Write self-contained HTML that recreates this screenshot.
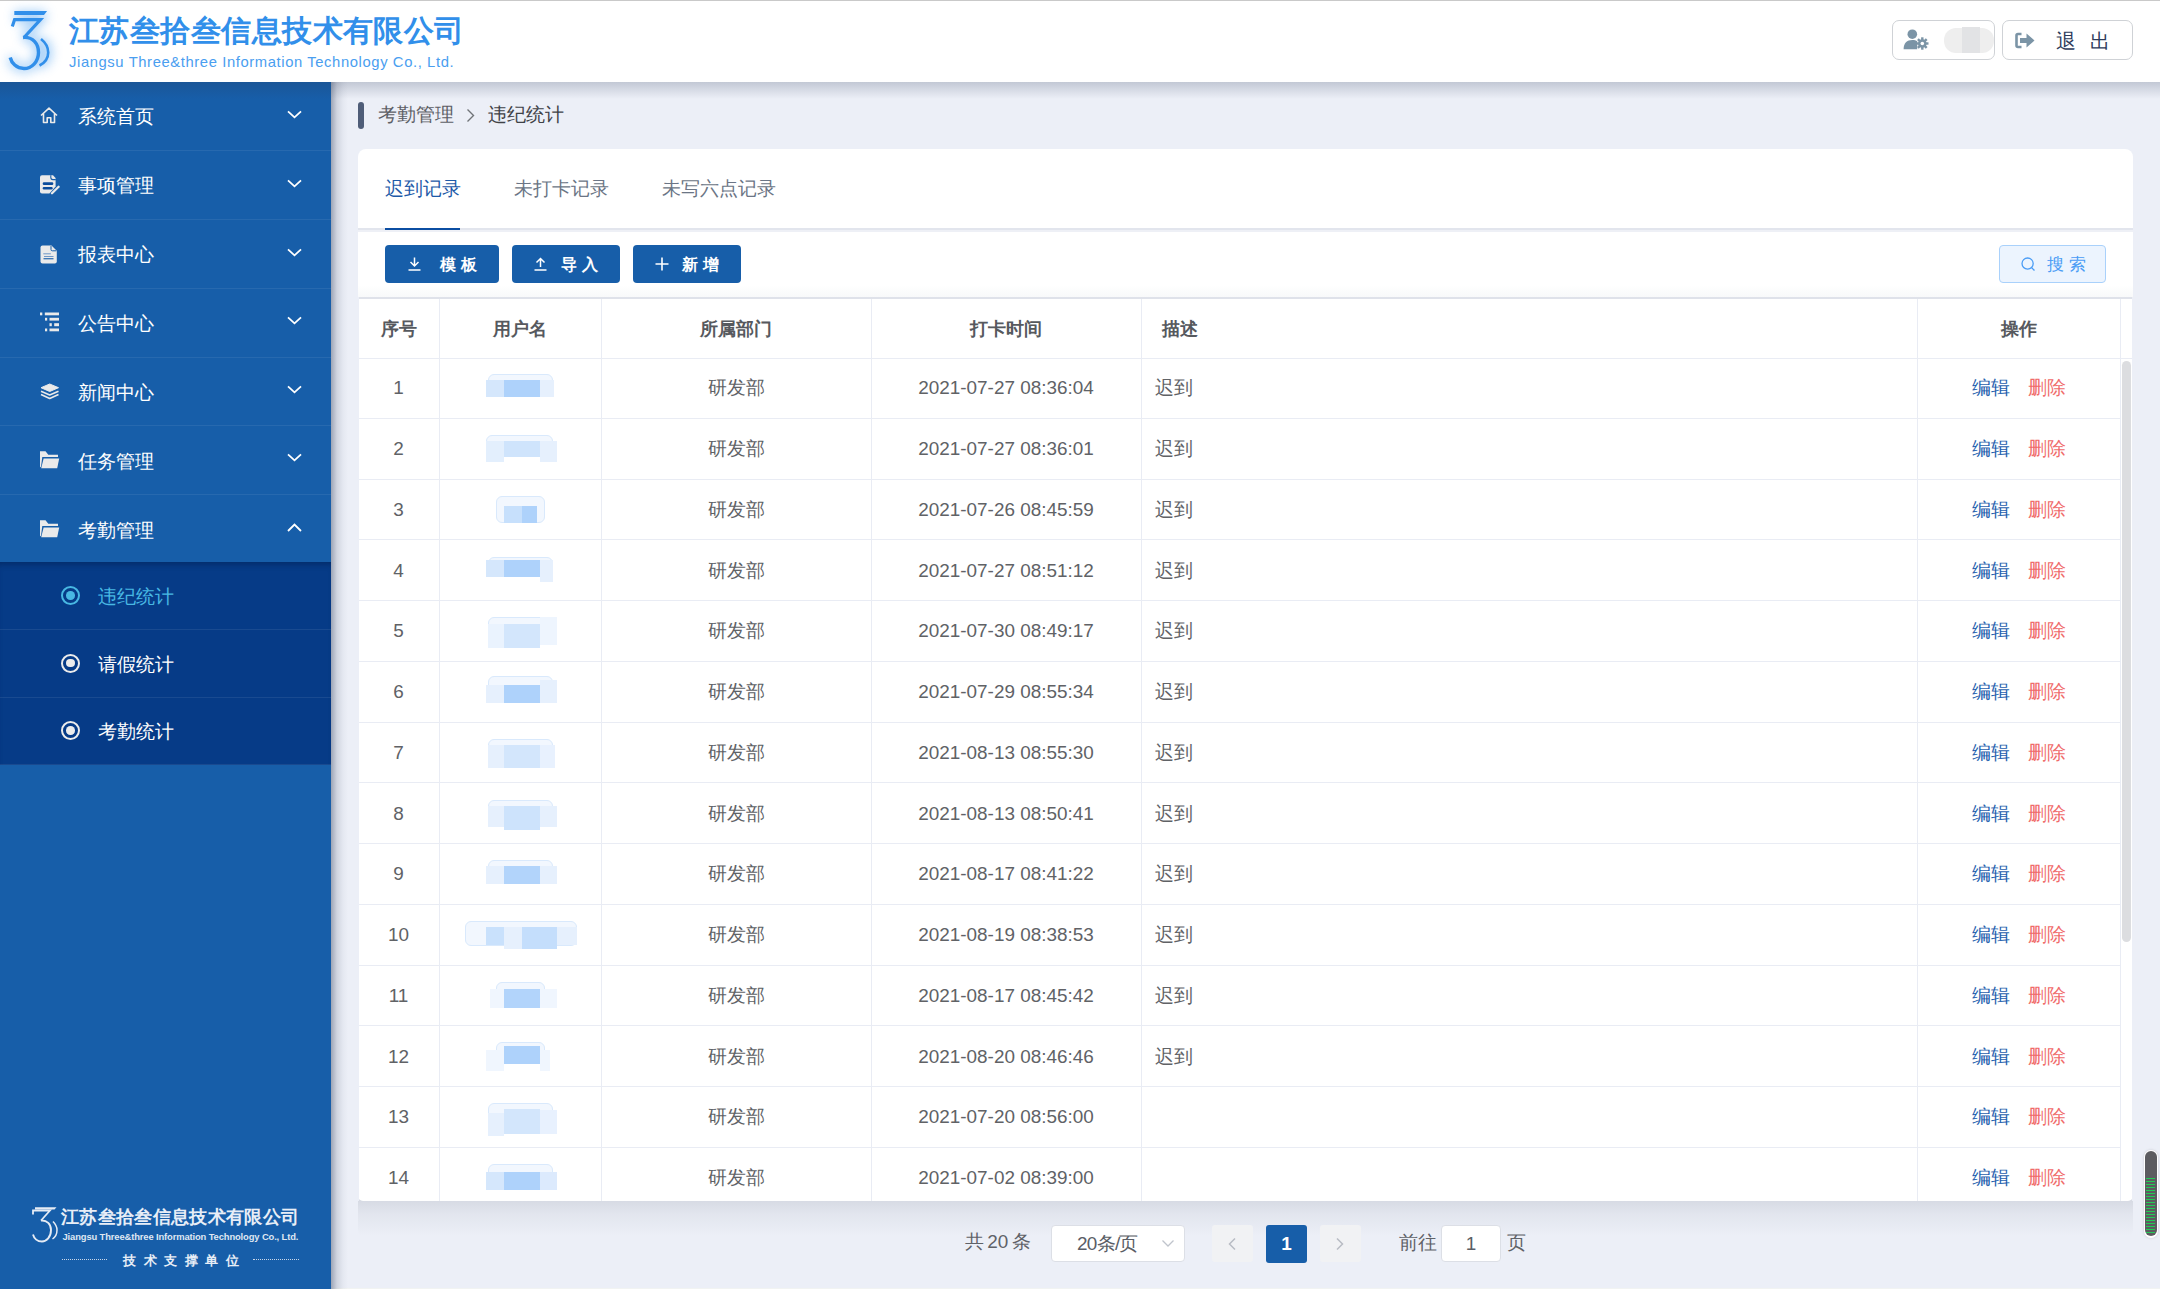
<!DOCTYPE html>
<html><head><meta charset="utf-8">
<style>
*{box-sizing:border-box;margin:0;padding:0}
html,body{width:2160px;height:1289px;overflow:hidden;background:#eceff7;font-family:"Liberation Sans",sans-serif;color:#606266}
.abs{position:absolute}
#hdr{position:absolute;left:0;top:0;width:2160px;height:82px;background:#fff;z-index:5}
#side{position:absolute;left:0;top:82px;width:331px;height:1207px;background:#175ea9;z-index:4}
.mi{position:absolute;left:0;width:331px;height:69px;border-bottom:1px solid rgba(255,255,255,.07)}
.mi .t{position:absolute;left:78px;top:0;line-height:69px;font-size:18.9px;color:#fff;white-space:nowrap}
.mi svg.ic{position:absolute;left:40px}
.mi svg.ch{position:absolute;left:287px;top:30px}
#sub{position:absolute;left:0;top:480px;width:331px;height:203px;background:#063b87;box-shadow:inset 0 6px 6px -4px rgba(0,20,60,.45)}
.si{position:absolute;left:0;width:331px;height:68px;border-bottom:1px solid rgba(255,255,255,.08)}
.si .t{position:absolute;left:98px;top:1px;line-height:68px;font-size:18.9px;color:#fff;white-space:nowrap}
.si .r{position:absolute;left:61px;top:24px;width:19px;height:19px;border:2.2px solid #ececec;border-radius:50%}
.si .r:after{content:"";position:absolute;left:3px;top:3px;width:8.6px;height:8.6px;border-radius:50%;background:#ececec}
#card{position:absolute;left:358px;top:149px;width:1775px;height:1052px;background:#fff;border-radius:8px 8px 5px 5px;overflow:hidden}
.si.act .t{color:#48b8e3}
.si.act .r{border-color:#48b8e3}
.si.act .r:after{background:#48b8e3}
.tab{font-size:18.9px;line-height:32px;white-space:nowrap}
.btn{top:96px;height:38px;background:#175ea9;border-radius:4px}
.btn span{position:absolute;top:6px;font-size:15.8px;line-height:27px;color:#fff;font-weight:bold;letter-spacing:4.8px;white-space:nowrap}
.th{font-size:18.4px;font-weight:bold;color:#56595e;white-space:nowrap}
.c{text-align:center}
.td{font-size:18.9px;color:#606266;white-space:nowrap}
.hl{left:0;width:1775px;height:1px;background:#e9ecf4}
.vl{top:150px;width:1px;height:902px;background:#e9ecf4}
.ops{width:203px;height:60px;line-height:60px;text-align:center;font-size:18.9px;white-space:nowrap}
.pg{font-size:18.9px;color:#5f6268;white-space:nowrap}
</style></head><body>
<div id="hdr"><div class="abs" style="left:0;top:0;width:2160px;height:1px;background:#c9c9c9"></div>
<svg class="abs" style="left:0;top:0" width="68" height="82" viewBox="0 0 68 82">
<defs><filter id="blr" x="-50%" y="-50%" width="200%" height="200%"><feGaussianBlur stdDeviation="5.5"/></filter></defs>
<g filter="url(#blr)" opacity=".55">
<path d="M14.3 11 L47.1 11 L44 15 L14.3 15 Z" fill="#4a9ef0"/>
<path d="M15 19.6 L40.5 19.6 L24 37.5 M23 37.5 C33 36.5 38.5 44 38.5 52.5 C38.5 62 31.5 68.5 24 68.5 C16.5 68.5 11.5 63 10.2 57.5 M41 39 C46 43 48.2 48 48.2 52.5 C48.2 57.5 45.5 62.5 39.5 65.5" fill="none" stroke="#4a9ef0" stroke-width="7"/>
</g>
<path d="M14.3 11 L47.1 11 L44 15 L14.3 15 Z" fill="#318fea"/>
<path d="M12.3 26.5 L14.6 19.6 L40.5 19.6 L24 37.5" fill="none" stroke="#318fea" stroke-width="3.2" stroke-linejoin="miter"/>
<path d="M23 37.5 C33 36.5 38.5 44 38.5 52.5 C38.5 62 31.5 68.5 24 68.5 C16.5 68.5 11.5 63 10.2 57.5" fill="none" stroke="#318fea" stroke-width="3.4"/>
<path d="M41 39 C46 43 48.2 48 48.2 52.5 C48.2 57.5 45.5 62.5 39.5 65.5" fill="none" stroke="#318fea" stroke-width="2.6"/>
</svg>
<div class="abs" id="logot" style="left:69px;top:11px;font-size:30px;letter-spacing:0.45px;font-weight:bold;color:#318fea;white-space:nowrap;line-height:40px">江苏叁拾叁信息技术有限公司</div>
<div class="abs" id="logoe" style="left:69px;top:52.5px;font-size:14.8px;color:#4a9ef0;white-space:nowrap;line-height:18px;letter-spacing:0.6px">Jiangsu Three&amp;three Information Technology Co., Ltd.</div>
<div class="abs" style="left:1892px;top:20px;width:103px;height:40px;border:1px solid #cfd2d6;border-radius:7px"></div>
<svg class="abs" style="left:1903px;top:29px" width="26" height="22" viewBox="0 0 26 22">
<circle cx="9.3" cy="5.2" r="4.8" fill="#7b94a6"/>
<path d="M0.6 20.3 C0.6 14 4 11 9.3 11 C11.5 11 13 11.5 14.2 12.3 L14.2 20.3 Z" fill="#7b94a6"/>
<g transform="translate(19.3 14.5)" fill="#7b94a6"><circle r="4.3"/><rect x="-1.2" y="-6.2" width="2.4" height="12.4"/><rect x="-6.2" y="-1.2" width="12.4" height="2.4"/><rect x="-1.2" y="-6.2" width="2.4" height="12.4" transform="rotate(45)"/><rect x="-1.2" y="-6.2" width="2.4" height="12.4" transform="rotate(-45)"/></g>
<circle cx="19.3" cy="14.5" r="1.8" fill="#fff"/>
</svg>
<div class="abs" style="left:1944px;top:28px;width:50px;height:25px;border-radius:12px;background:#eeeeee"></div>
<div class="abs" style="left:1962px;top:27px;width:18px;height:26px;background:#e2e3e5"></div>
<div class="abs" style="left:2002px;top:20px;width:131px;height:40px;border:1px solid #cfd2d6;border-radius:7px"></div>
<svg class="abs" style="left:2015px;top:32px" width="22" height="17" viewBox="0 0 22 17">
<path d="M6.5 2 L3 2 Q1.5 2 1.5 3.5 L1.5 13.5 Q1.5 15 3 15 L6.5 15" fill="none" stroke="#7b94a6" stroke-width="2.6"/>
<path d="M5 6 L11.5 6 L11.5 1.5 L19.5 8.5 L11.5 15.5 L11.5 11 L5 11 Z" fill="#7b94a6"/>
</svg>
<div class="abs" style="left:2055.5px;top:28px;font-size:20px;color:#2d3b5a;white-space:nowrap;line-height:26px;letter-spacing:14px">退出</div>
</div>
<div id="side">
<div class="mi" style="top:0.40px;height:68.8px"><svg class="ic" style="top:25.00px" width="18" height="17" viewBox="0 0 18 17"><path d="M1 8.5 L9 1.2 L17 8.5 M3.5 6.5 L3.5 15.5 L7.2 15.5 L7.2 10.8 L10.8 10.8 L10.8 15.5 L14.5 15.5 L14.5 6.5" fill="none" stroke="#eaeaea" stroke-width="1.6" stroke-linejoin="round"/></svg><div class="t" style="top:0.60px;line-height:68.8px">系统首页</div><svg class="ch" style="top:28.00px" width="15" height="9" viewBox="0 0 15 9"><path d="M1 1.3 L7.5 7.3 L14 1.3" fill="none" stroke="#fff" stroke-width="1.8"/></svg></div>
<div class="mi" style="top:69.20px;height:68.8px"><svg class="ic" style="top:23.80px" width="20" height="20" viewBox="0 0 20 20"><path d="M2 0.3 H13 L15.6 3 V11.6 L9.4 18.4 H2 Q0 18.4 0 16.4 V2.3 Q0 0.3 2 0.3 Z" fill="#eaeaea"/><path d="M10.8 0.3 V2.6 Q10.8 4.6 12.8 4.6 H15.8" fill="none" stroke="#175ea9" stroke-width="1.1"/><rect x="2.7" y="7.3" width="10.6" height="2.7" rx="1.3" fill="#0b4c9c"/><rect x="2.7" y="11.9" width="10" height="2.5" rx="1.2" fill="#0b4c9c"/><path d="M12 18.3 L18.6 11.8" stroke="#eaeaea" stroke-width="2.3" stroke-linecap="round"/></svg><div class="t" style="top:0.76px;line-height:68.8px">事项管理</div><svg class="ch" style="top:27.80px" width="15" height="9" viewBox="0 0 15 9"><path d="M1 1.3 L7.5 7.3 L14 1.3" fill="none" stroke="#fff" stroke-width="1.8"/></svg></div>
<div class="mi" style="top:138.00px;height:68.8px"><svg class="ic" style="top:24.60px" width="18" height="19" viewBox="0 0 18 19"><path d="M2.5 0.5 L11.5 0.5 L16.8 5.8 L16.8 16.5 Q16.8 18.5 14.8 18.5 L2.5 18.5 Q0.5 18.5 0.5 16.5 L0.5 2.5 Q0.5 0.5 2.5 0.5 Z" fill="#eaeaea"/><path d="M11 1 L11 4.5 Q11 5.8 12.3 5.8 L16.3 5.8" fill="none" stroke="#175ea9" stroke-width="1"/><rect x="3.3" y="8.3" width="7.5" height="1" fill="#6f97c6"/><rect x="4" y="11" width="9.5" height="1" fill="#6f97c6"/><rect x="3.5" y="13.2" width="10" height="1.1" fill="#175ea9"/></svg><div class="t" style="top:0.92px;line-height:68.8px">报表中心</div><svg class="ch" style="top:27.60px" width="15" height="9" viewBox="0 0 15 9"><path d="M1 1.3 L7.5 7.3 L14 1.3" fill="none" stroke="#fff" stroke-width="1.8"/></svg></div>
<div class="mi" style="top:206.80px;height:68.8px"><svg class="ic" style="top:23.40px" width="20" height="20" viewBox="0 0 20 20" fill="#eaeaea"><rect x="0" y="0.5" width="2.3" height="2.8"/><rect x="4.8" y="0.5" width="14.2" height="2.8"/><rect x="5" y="5.8" width="2.2" height="2.8"/><rect x="9.5" y="5.8" width="9.5" height="2.8"/><rect x="9.5" y="11.2" width="2.3" height="3"/><rect x="14.2" y="11.2" width="4.8" height="3"/><rect x="5" y="16.5" width="2.2" height="2.8"/><rect x="9.5" y="16.5" width="9.5" height="2.8"/></svg><div class="t" style="top:1.08px;line-height:68.8px">公告中心</div><svg class="ch" style="top:27.40px" width="15" height="9" viewBox="0 0 15 9"><path d="M1 1.3 L7.5 7.3 L14 1.3" fill="none" stroke="#fff" stroke-width="1.8"/></svg></div>
<div class="mi" style="top:275.60px;height:68.8px"><svg class="ic" style="top:25.20px" width="20" height="17" viewBox="0 0 20 17"><path d="M1 4.7 L9.7 1 L18.5 4.7 L9.7 8.5 Z" fill="#eaeaea" stroke="#eaeaea" stroke-width="1" stroke-linejoin="round"/><path d="M1 8.3 L9.7 12 L18.5 8.3" fill="none" stroke="#eaeaea" stroke-width="1.6" stroke-linejoin="round"/><path d="M1 11.5 L9.7 15.5 L18.5 11.5" fill="none" stroke="#eaeaea" stroke-width="1.6" stroke-linejoin="round"/></svg><div class="t" style="top:1.24px;line-height:68.8px">新闻中心</div><svg class="ch" style="top:27.20px" width="15" height="9" viewBox="0 0 15 9"><path d="M1 1.3 L7.5 7.3 L14 1.3" fill="none" stroke="#fff" stroke-width="1.8"/></svg></div>
<div class="mi" style="top:344.40px;height:68.8px"><svg class="ic" style="top:25.00px" width="20" height="18" viewBox="0 0 20 18"><path d="M0 0.2 H5.5 L8.3 3.8 H18 V5.9 H2.3 L0.9 16.6 L0 15.5 Z" fill="#eaeaea"/><path d="M3.6 7.4 H19.2 L17.2 17.2 H1.2 Z" fill="#eaeaea"/></svg><div class="t" style="top:1.40px;line-height:68.8px">任务管理</div><svg class="ch" style="top:27.00px" width="15" height="9" viewBox="0 0 15 9"><path d="M1 1.3 L7.5 7.3 L14 1.3" fill="none" stroke="#fff" stroke-width="1.8"/></svg></div>
<div class="mi" style="top:413.20px;height:68.8px;border-bottom:none"><svg class="ic" style="top:24.80px" width="20" height="18" viewBox="0 0 20 18"><path d="M0 0.2 H5.5 L8.3 3.8 H18 V5.9 H2.3 L0.9 16.6 L0 15.5 Z" fill="#eaeaea"/><path d="M3.6 7.4 H19.2 L17.2 17.2 H1.2 Z" fill="#eaeaea"/></svg><div class="t" style="top:1.56px;line-height:68.8px">考勤管理</div><svg class="ch" style="top:27.80px" width="15" height="9" viewBox="0 0 15 9"><path d="M1 8 L7.5 1.5 L14 8" fill="none" stroke="#fff" stroke-width="1.8"/></svg></div>
<div id="sub">
<div class="si act" style="top:0.00px"><div class="r"></div><div class="t">违纪统计</div></div>
<div class="si" style="top:67.67px"><div class="r"></div><div class="t">请假统计</div></div>
<div class="si" style="top:135.34px"><div class="r"></div><div class="t">考勤统计</div></div>
</div>
<div id="blogo">
<svg class="abs" style="left:31px;top:1124px" width="28" height="40" viewBox="0 0 28 40">
<path d="M4 1.3 L25.5 1.3 L23.5 3.6 L4 3.6 Z" fill="#e6ecf5"/>
<path d="M2 8.5 L2 4.5 L19 4.5 L10 14.5" fill="none" stroke="#e6ecf5" stroke-width="1.8"/>
<path d="M10 14.5 C16 14 20 18 20 24 C20 31 15.5 35.5 11 35.5 C6.5 35.5 3 32.5 2 28.5" fill="none" stroke="#e6ecf5" stroke-width="1.9"/>
<path d="M22 15.5 C25 18.5 26 21.5 26 24 C26 27.5 24.5 31 21.5 33" fill="none" stroke="#e6ecf5" stroke-width="1.5"/>
</svg>
<div class="abs" style="left:61px;top:1122.5px;font-size:18px;font-weight:bold;color:#e8eef7;white-space:nowrap;line-height:24px;letter-spacing:0.35px">江苏叁拾叁信息技术有限公司</div>
<div class="abs" style="left:62.5px;top:1148.5px;font-size:9.4px;font-weight:bold;color:#dfe7f2;white-space:nowrap;line-height:12px;letter-spacing:-0.12px">Jiangsu Three&amp;three Information Technology Co., Ltd.</div>
<div class="abs" style="left:62px;top:1177px;width:45px;border-top:1px dotted #c9d6e8"></div>
<div class="abs" style="left:253px;top:1177px;width:46px;border-top:1px dotted #c9d6e8"></div>
<div class="abs" style="left:123px;top:1170.5px;font-size:12.5px;font-weight:bold;color:#e8eef7;white-space:nowrap;line-height:16px;letter-spacing:7.6px">技术支撑单位</div>
</div>
</div>
<div class="abs" style="left:358px;top:102px;width:6px;height:27px;border-radius:3px;background:#4f5d78"></div>
<div class="abs" id="bc" style="left:378px;top:99px;font-size:18.9px;line-height:32px;color:#5d6066;white-space:nowrap">考勤管理</div>
<svg class="abs" style="left:466px;top:108px" width="9" height="15" viewBox="0 0 9 15"><path d="M1.5 1.5 L7.5 7.5 L1.5 13.5" fill="none" stroke="#707478" stroke-width="1.4"/></svg>
<div class="abs" style="left:488px;top:99px;font-size:18.9px;line-height:32px;color:#3f4247;white-space:nowrap">违纪统计</div>
<div class="abs" style="left:358px;top:1196px;width:1775px;height:40px;background:linear-gradient(rgba(40,50,70,.13),rgba(40,50,70,.05) 45%,rgba(40,50,70,0));border-radius:0 0 6px 6px"></div>
<div id="card">
<div class="abs tab" style="left:27px;top:24px;color:#1d5aa8">迟到记录</div>
<div class="abs tab" style="left:156px;top:24px;color:#6b7585">未打卡记录</div>
<div class="abs tab" style="left:304px;top:24px;color:#6b7585">未写六点记录</div>
<div class="abs" style="left:0;top:79px;width:1775px;height:2px;background:#e2e5ed"></div>
<div class="abs" style="left:0;top:81px;width:1775px;height:2px;background:#eef0f6"></div>
<div class="abs" style="left:27px;top:79px;width:75px;height:2px;background:#0b4ea2"></div>
<div class="abs" style="left:0;top:136px;width:1775px;height:12px;background:linear-gradient(#fff,#f8f9fa)"></div>
<div class="abs btn" style="left:27px;width:114px"><svg width="13" height="14" viewBox="0 0 13 14" style="position:absolute;left:23px;top:12px"><path d="M6.5 0.5 L6.5 9 M2.5 5 L6.5 9 L10.5 5 M0.5 13 L12.5 13" fill="none" stroke="#fff" stroke-width="1.5"/></svg><span style="left:55px">模板</span></div>
<div class="abs btn" style="left:154px;width:108px"><svg width="13" height="14" viewBox="0 0 13 14" style="position:absolute;left:22px;top:12px"><path d="M6.5 10 L6.5 1.5 M2.5 5.5 L6.5 1.5 L10.5 5.5 M0.5 13 L12.5 13" fill="none" stroke="#fff" stroke-width="1.5"/></svg><span style="left:49px">导入</span></div>
<div class="abs btn" style="left:275px;width:108px"><svg width="14" height="14" viewBox="0 0 14 14" style="position:absolute;left:22px;top:12px"><path d="M7 0.5 L7 13.5 M0.5 7 L13.5 7" fill="none" stroke="#fff" stroke-width="1.6"/></svg><span style="left:49px">新增</span></div>
<div class="abs" style="left:1641px;top:96px;width:107px;height:38px;border:1px solid #a9d1fb;border-radius:4px;background:#ecf4fe"><svg width="15" height="15" viewBox="0 0 15 15" style="position:absolute;left:21px;top:11px"><circle cx="6.6" cy="6.6" r="5.6" fill="none" stroke="#4a9cf5" stroke-width="1.3"/><path d="M10.6 10.6 L13.5 13.5" stroke="#4a9cf5" stroke-width="1.3"/></svg><span class="abs" style="left:47px;top:6px;font-size:17px;line-height:26px;color:#4a9cf5;letter-spacing:4.5px;white-space:nowrap">搜索</span></div>
<div class="abs" style="left:0;top:148px;width:1775px;height:2px;background:#dfe2ea"></div>
<div class="abs th c" style="left:0px;top:150.00px;width:81px;height:59px;line-height:59px">序号</div>
<div class="abs th c" style="left:81px;top:150.00px;width:162px;height:59px;line-height:59px">用户名</div>
<div class="abs th c" style="left:243px;top:150.00px;width:270px;height:59px;line-height:59px">所属部门</div>
<div class="abs th c" style="left:513px;top:150.00px;width:270px;height:59px;line-height:59px">打卡时间</div>
<div class="abs th" style="left:804px;top:150.00px;width:238px;height:59px;line-height:59px">描述</div>
<div class="abs th c" style="left:1559px;top:150.00px;width:203px;height:59px;line-height:59px">操作</div>
<div class="abs hl" style="top:209px"></div>
<div class="abs hl" style="top:269px;width:1762px"></div>
<div class="abs hl" style="top:330px;width:1762px"></div>
<div class="abs hl" style="top:390px;width:1762px"></div>
<div class="abs hl" style="top:451px;width:1762px"></div>
<div class="abs hl" style="top:512px;width:1762px"></div>
<div class="abs hl" style="top:573px;width:1762px"></div>
<div class="abs hl" style="top:633px;width:1762px"></div>
<div class="abs hl" style="top:694px;width:1762px"></div>
<div class="abs hl" style="top:755px;width:1762px"></div>
<div class="abs hl" style="top:816px;width:1762px"></div>
<div class="abs hl" style="top:876px;width:1762px"></div>
<div class="abs hl" style="top:937px;width:1762px"></div>
<div class="abs hl" style="top:998px;width:1762px"></div>
<div class="abs vl" style="left:81px"></div>
<div class="abs vl" style="left:243px"></div>
<div class="abs vl" style="left:513px"></div>
<div class="abs vl" style="left:783px"></div>
<div class="abs vl" style="left:1559px"></div>
<div class="abs vl" style="left:1762px"></div>
<div class="abs td c" style="left:0px;top:209.25px;width:81px;height:60px;line-height:60px">1</div>
<div class="abs td c" style="left:243px;top:209.25px;width:270px;height:60px;line-height:60px">研发部</div>
<div class="abs td c" style="left:513px;top:209.25px;width:270px;height:60px;line-height:60px">2021-07-27 08:36:04</div>
<div class="abs td" style="left:797px;top:209.25px;width:145px;height:60px;line-height:60px">迟到</div>
<div class="abs ops" style="left:1559px;top:209.25px"><span style="color:#1f5fae">编辑</span><span style="color:#f06b6b;margin-left:18px">删除</span></div>
<div class="abs" style="left:130px;top:225px;width:65px;height:17px;border:1px solid #d9e9fc;border-radius:6px;background:#f2f7fe"></div>
<div class="abs" style="left:128px;top:231px;width:18px;height:17px;background:#d5e7fc"></div>
<div class="abs" style="left:146px;top:231px;width:36px;height:17px;background:#aed2fb"></div>
<div class="abs" style="left:182px;top:231px;width:14px;height:17px;background:#e6f0fd"></div>
<div class="abs td c" style="left:0px;top:270.00px;width:81px;height:60px;line-height:60px">2</div>
<div class="abs td c" style="left:243px;top:270.00px;width:270px;height:60px;line-height:60px">研发部</div>
<div class="abs td c" style="left:513px;top:270.00px;width:270px;height:60px;line-height:60px">2021-07-27 08:36:01</div>
<div class="abs td" style="left:797px;top:270.00px;width:145px;height:60px;line-height:60px">迟到</div>
<div class="abs ops" style="left:1559px;top:270.00px"><span style="color:#1f5fae">编辑</span><span style="color:#f06b6b;margin-left:18px">删除</span></div>
<div class="abs" style="left:128px;top:286px;width:67px;height:18px;border:1px solid #d9e9fc;border-radius:6px;background:#f2f7fe"></div>
<div class="abs" style="left:128px;top:292px;width:18px;height:21px;background:#e3effd"></div>
<div class="abs" style="left:146px;top:292px;width:36px;height:16px;background:#cfe4fc"></div>
<div class="abs" style="left:182px;top:292px;width:17px;height:21px;background:#e6f0fd"></div>
<div class="abs td c" style="left:0px;top:330.75px;width:81px;height:60px;line-height:60px">3</div>
<div class="abs td c" style="left:243px;top:330.75px;width:270px;height:60px;line-height:60px">研发部</div>
<div class="abs td c" style="left:513px;top:330.75px;width:270px;height:60px;line-height:60px">2021-07-26 08:45:59</div>
<div class="abs td" style="left:797px;top:330.75px;width:145px;height:60px;line-height:60px">迟到</div>
<div class="abs ops" style="left:1559px;top:330.75px"><span style="color:#1f5fae">编辑</span><span style="color:#f06b6b;margin-left:18px">删除</span></div>
<div class="abs" style="left:138px;top:347px;width:49px;height:27px;border:1px solid #d9e9fc;border-radius:6px;background:#f2f7fe"></div>
<div class="abs" style="left:146px;top:357px;width:18px;height:17px;background:#c7e0fc"></div>
<div class="abs" style="left:164px;top:357px;width:15px;height:17px;background:#aed2fb"></div>
<div class="abs td c" style="left:0px;top:391.50px;width:81px;height:60px;line-height:60px">4</div>
<div class="abs td c" style="left:243px;top:391.50px;width:270px;height:60px;line-height:60px">研发部</div>
<div class="abs td c" style="left:513px;top:391.50px;width:270px;height:60px;line-height:60px">2021-07-27 08:51:12</div>
<div class="abs td" style="left:797px;top:391.50px;width:145px;height:60px;line-height:60px">迟到</div>
<div class="abs ops" style="left:1559px;top:391.50px"><span style="color:#1f5fae">编辑</span><span style="color:#f06b6b;margin-left:18px">删除</span></div>
<div class="abs" style="left:130px;top:408px;width:65px;height:18px;border:1px solid #d9e9fc;border-radius:6px;background:#f2f7fe"></div>
<div class="abs" style="left:128px;top:411px;width:18px;height:17px;background:#d5e7fc"></div>
<div class="abs" style="left:146px;top:411px;width:36px;height:17px;background:#aed2fb"></div>
<div class="abs" style="left:182px;top:411px;width:13px;height:22px;background:#e6f0fd"></div>
<div class="abs td c" style="left:0px;top:452.25px;width:81px;height:60px;line-height:60px">5</div>
<div class="abs td c" style="left:243px;top:452.25px;width:270px;height:60px;line-height:60px">研发部</div>
<div class="abs td c" style="left:513px;top:452.25px;width:270px;height:60px;line-height:60px">2021-07-30 08:49:17</div>
<div class="abs td" style="left:797px;top:452.25px;width:145px;height:60px;line-height:60px">迟到</div>
<div class="abs ops" style="left:1559px;top:452.25px"><span style="color:#1f5fae">编辑</span><span style="color:#f06b6b;margin-left:18px">删除</span></div>
<div class="abs" style="left:130px;top:468px;width:65px;height:18px;border:1px solid #d9e9fc;border-radius:6px;background:#f2f7fe"></div>
<div class="abs" style="left:130px;top:475px;width:16px;height:24px;background:#eaf3fe"></div>
<div class="abs" style="left:146px;top:475px;width:36px;height:24px;background:#d3e6fc"></div>
<div class="abs" style="left:182px;top:468px;width:17px;height:28px;background:#eef5fe"></div>
<div class="abs td c" style="left:0px;top:513.00px;width:81px;height:60px;line-height:60px">6</div>
<div class="abs td c" style="left:243px;top:513.00px;width:270px;height:60px;line-height:60px">研发部</div>
<div class="abs td c" style="left:513px;top:513.00px;width:270px;height:60px;line-height:60px">2021-07-29 08:55:34</div>
<div class="abs td" style="left:797px;top:513.00px;width:145px;height:60px;line-height:60px">迟到</div>
<div class="abs ops" style="left:1559px;top:513.00px"><span style="color:#1f5fae">编辑</span><span style="color:#f06b6b;margin-left:18px">删除</span></div>
<div class="abs" style="left:130px;top:527px;width:65px;height:18px;border:1px solid #d9e9fc;border-radius:6px;background:#f2f7fe"></div>
<div class="abs" style="left:128px;top:536px;width:18px;height:18px;background:#e6f0fd"></div>
<div class="abs" style="left:146px;top:536px;width:36px;height:18px;background:#aed2fb"></div>
<div class="abs" style="left:182px;top:531px;width:17px;height:23px;background:#e6f0fd"></div>
<div class="abs td c" style="left:0px;top:573.75px;width:81px;height:60px;line-height:60px">7</div>
<div class="abs td c" style="left:243px;top:573.75px;width:270px;height:60px;line-height:60px">研发部</div>
<div class="abs td c" style="left:513px;top:573.75px;width:270px;height:60px;line-height:60px">2021-08-13 08:55:30</div>
<div class="abs td" style="left:797px;top:573.75px;width:145px;height:60px;line-height:60px">迟到</div>
<div class="abs ops" style="left:1559px;top:573.75px"><span style="color:#1f5fae">编辑</span><span style="color:#f06b6b;margin-left:18px">删除</span></div>
<div class="abs" style="left:130px;top:590px;width:65px;height:18px;border:1px solid #d9e9fc;border-radius:6px;background:#f2f7fe"></div>
<div class="abs" style="left:130px;top:596px;width:16px;height:23px;background:#e6f0fd"></div>
<div class="abs" style="left:146px;top:596px;width:36px;height:23px;background:#d3e6fc"></div>
<div class="abs" style="left:182px;top:596px;width:15px;height:23px;background:#e8f1fe"></div>
<div class="abs td c" style="left:0px;top:634.50px;width:81px;height:60px;line-height:60px">8</div>
<div class="abs td c" style="left:243px;top:634.50px;width:270px;height:60px;line-height:60px">研发部</div>
<div class="abs td c" style="left:513px;top:634.50px;width:270px;height:60px;line-height:60px">2021-08-13 08:50:41</div>
<div class="abs td" style="left:797px;top:634.50px;width:145px;height:60px;line-height:60px">迟到</div>
<div class="abs ops" style="left:1559px;top:634.50px"><span style="color:#1f5fae">编辑</span><span style="color:#f06b6b;margin-left:18px">删除</span></div>
<div class="abs" style="left:130px;top:651px;width:65px;height:18px;border:1px solid #d9e9fc;border-radius:6px;background:#f2f7fe"></div>
<div class="abs" style="left:130px;top:657px;width:16px;height:21px;background:#e6f0fd"></div>
<div class="abs" style="left:146px;top:657px;width:36px;height:24px;background:#cde3fc"></div>
<div class="abs" style="left:182px;top:657px;width:17px;height:21px;background:#e6f0fd"></div>
<div class="abs td c" style="left:0px;top:695.25px;width:81px;height:60px;line-height:60px">9</div>
<div class="abs td c" style="left:243px;top:695.25px;width:270px;height:60px;line-height:60px">研发部</div>
<div class="abs td c" style="left:513px;top:695.25px;width:270px;height:60px;line-height:60px">2021-08-17 08:41:22</div>
<div class="abs td" style="left:797px;top:695.25px;width:145px;height:60px;line-height:60px">迟到</div>
<div class="abs ops" style="left:1559px;top:695.25px"><span style="color:#1f5fae">编辑</span><span style="color:#f06b6b;margin-left:18px">删除</span></div>
<div class="abs" style="left:130px;top:711px;width:65px;height:18px;border:1px solid #d9e9fc;border-radius:6px;background:#f2f7fe"></div>
<div class="abs" style="left:128px;top:717px;width:18px;height:18px;background:#e6f0fd"></div>
<div class="abs" style="left:146px;top:717px;width:36px;height:18px;background:#b2d4fb"></div>
<div class="abs" style="left:182px;top:717px;width:17px;height:18px;background:#e6f0fd"></div>
<div class="abs td c" style="left:0px;top:756.00px;width:81px;height:60px;line-height:60px">10</div>
<div class="abs td c" style="left:243px;top:756.00px;width:270px;height:60px;line-height:60px">研发部</div>
<div class="abs td c" style="left:513px;top:756.00px;width:270px;height:60px;line-height:60px">2021-08-19 08:38:53</div>
<div class="abs td" style="left:797px;top:756.00px;width:145px;height:60px;line-height:60px">迟到</div>
<div class="abs ops" style="left:1559px;top:756.00px"><span style="color:#1f5fae">编辑</span><span style="color:#f06b6b;margin-left:18px">删除</span></div>
<div class="abs" style="left:107px;top:772px;width:112px;height:25px;border:1px solid #d9e9fc;border-radius:6px;background:#f2f7fe"></div>
<div class="abs" style="left:128px;top:778px;width:18px;height:18px;background:#c9e1fc"></div>
<div class="abs" style="left:146px;top:778px;width:18px;height:22px;background:#e6f0fd"></div>
<div class="abs" style="left:164px;top:778px;width:35px;height:22px;background:#c4defc"></div>
<div class="abs" style="left:199px;top:778px;width:20px;height:18px;background:#e6f0fd"></div>
<div class="abs td c" style="left:0px;top:816.75px;width:81px;height:60px;line-height:60px">11</div>
<div class="abs td c" style="left:243px;top:816.75px;width:270px;height:60px;line-height:60px">研发部</div>
<div class="abs td c" style="left:513px;top:816.75px;width:270px;height:60px;line-height:60px">2021-08-17 08:45:42</div>
<div class="abs td" style="left:797px;top:816.75px;width:145px;height:60px;line-height:60px">迟到</div>
<div class="abs ops" style="left:1559px;top:816.75px"><span style="color:#1f5fae">编辑</span><span style="color:#f06b6b;margin-left:18px">删除</span></div>
<div class="abs" style="left:138px;top:833px;width:49px;height:18px;border:1px solid #d9e9fc;border-radius:6px;background:#f2f7fe"></div>
<div class="abs" style="left:146px;top:840px;width:36px;height:19px;background:#b2d4fb"></div>
<div class="abs" style="left:132px;top:840px;width:14px;height:19px;background:#f0f6fe"></div>
<div class="abs" style="left:182px;top:840px;width:17px;height:19px;background:#f0f6fe"></div>
<div class="abs td c" style="left:0px;top:877.50px;width:81px;height:60px;line-height:60px">12</div>
<div class="abs td c" style="left:243px;top:877.50px;width:270px;height:60px;line-height:60px">研发部</div>
<div class="abs td c" style="left:513px;top:877.50px;width:270px;height:60px;line-height:60px">2021-08-20 08:46:46</div>
<div class="abs td" style="left:797px;top:877.50px;width:145px;height:60px;line-height:60px">迟到</div>
<div class="abs ops" style="left:1559px;top:877.50px"><span style="color:#1f5fae">编辑</span><span style="color:#f06b6b;margin-left:18px">删除</span></div>
<div class="abs" style="left:138px;top:893px;width:49px;height:18px;border:1px solid #d9e9fc;border-radius:6px;background:#f2f7fe"></div>
<div class="abs" style="left:146px;top:897px;width:36px;height:18px;background:#aed2fb"></div>
<div class="abs" style="left:128px;top:901px;width:18px;height:21px;background:#f0f6fe"></div>
<div class="abs" style="left:182px;top:901px;width:10px;height:21px;background:#f0f6fe"></div>
<div class="abs td c" style="left:0px;top:938.25px;width:81px;height:60px;line-height:60px">13</div>
<div class="abs td c" style="left:243px;top:938.25px;width:270px;height:60px;line-height:60px">研发部</div>
<div class="abs td c" style="left:513px;top:938.25px;width:270px;height:60px;line-height:60px">2021-07-20 08:56:00</div>
<div class="abs ops" style="left:1559px;top:938.25px"><span style="color:#1f5fae">编辑</span><span style="color:#f06b6b;margin-left:18px">删除</span></div>
<div class="abs" style="left:130px;top:954px;width:65px;height:18px;border:1px solid #d9e9fc;border-radius:6px;background:#f2f7fe"></div>
<div class="abs" style="left:130px;top:964px;width:16px;height:23px;background:#e6f0fd"></div>
<div class="abs" style="left:146px;top:960px;width:36px;height:25px;background:#d3e6fc"></div>
<div class="abs" style="left:182px;top:961px;width:17px;height:24px;background:#e8f1fe"></div>
<div class="abs td c" style="left:0px;top:999.00px;width:81px;height:60px;line-height:60px">14</div>
<div class="abs td c" style="left:243px;top:999.00px;width:270px;height:60px;line-height:60px">研发部</div>
<div class="abs td c" style="left:513px;top:999.00px;width:270px;height:60px;line-height:60px">2021-07-02 08:39:00</div>
<div class="abs ops" style="left:1559px;top:999.00px"><span style="color:#1f5fae">编辑</span><span style="color:#f06b6b;margin-left:18px">删除</span></div>
<div class="abs" style="left:130px;top:1015px;width:65px;height:18px;border:1px solid #d9e9fc;border-radius:6px;background:#f2f7fe"></div>
<div class="abs" style="left:128px;top:1023px;width:18px;height:18px;background:#d5e7fc"></div>
<div class="abs" style="left:146px;top:1023px;width:36px;height:18px;background:#aed2fb"></div>
<div class="abs" style="left:182px;top:1023px;width:17px;height:18px;background:#dceafd"></div>
<div class="abs" style="left:1764px;top:212px;width:9px;height:581px;border-radius:5px;background:#dcdde0"></div>
</div>
<div class="abs pg" style="left:965px;top:1226px;line-height:32px;word-spacing:-2px">共 20 条</div>
<div class="abs" style="left:1051px;top:1225px;width:134px;height:37px;border:1px solid #dcdfe6;border-radius:4px;background:#fff"></div>
<div class="abs pg" style="left:1077px;top:1228px;line-height:32px;color:#5a5e66;letter-spacing:-0.7px">20条/页</div>
<svg class="abs" style="left:1161px;top:1239px" width="14" height="9" viewBox="0 0 14 9"><path d="M1.5 1.5 L7 7 L12.5 1.5" fill="none" stroke="#c0c4cc" stroke-width="1.3"/></svg>
<div class="abs" style="left:1212px;top:1225px;width:41px;height:37px;border-radius:3px;background:#f1f2f4"></div>
<svg class="abs" style="left:1227px;top:1237px" width="10" height="14" viewBox="0 0 10 14"><path d="M8 1.5 L2.5 7 L8 12.5" fill="none" stroke="#b8bcc4" stroke-width="1.5"/></svg>
<div class="abs" style="left:1266px;top:1225px;width:41px;height:38px;border-radius:3px;background:#175ea9;color:#fff;font-weight:bold;font-size:18.9px;line-height:38px;text-align:center">1</div>
<div class="abs" style="left:1320px;top:1225px;width:41px;height:37px;border-radius:3px;background:#f1f2f4"></div>
<svg class="abs" style="left:1335px;top:1237px" width="10" height="14" viewBox="0 0 10 14"><path d="M2 1.5 L7.5 7 L2 12.5" fill="none" stroke="#b8bcc4" stroke-width="1.5"/></svg>
<div class="abs pg" style="left:1399px;top:1227px;line-height:32px">前往</div>
<div class="abs" style="left:1441px;top:1225px;width:60px;height:37px;border:1px solid #dcdfe6;border-radius:4px;background:#fff;text-align:center;font-size:18.9px;line-height:35px;color:#5a5e66">1</div>
<div class="abs pg" style="left:1507px;top:1227px;line-height:32px">页</div>
<div class="abs" style="left:2144px;top:1150px;width:14px;height:88px;border-radius:7px;background:#fff;box-shadow:0 0 3px rgba(0,0,0,.15)"></div>
<div class="abs" style="left:2145px;top:1151px;width:12px;height:85px;border-radius:6px;background:#5c5c60"></div>
<div class="abs" style="left:2146px;top:1178px;width:9px;height:1px;background:#22cc55"></div>
<div class="abs" style="left:2146px;top:1181px;width:9px;height:1px;background:#22cc55"></div>
<div class="abs" style="left:2146px;top:1184px;width:9px;height:1px;background:#22cc55"></div>
<div class="abs" style="left:2146px;top:1187px;width:9px;height:1px;background:#22cc55"></div>
<div class="abs" style="left:2146px;top:1190px;width:9px;height:1px;background:#22cc55"></div>
<div class="abs" style="left:2146px;top:1193px;width:9px;height:1px;background:#22cc55"></div>
<div class="abs" style="left:2146px;top:1196px;width:9px;height:1px;background:#22cc55"></div>
<div class="abs" style="left:2146px;top:1199px;width:9px;height:1px;background:#22cc55"></div>
<div class="abs" style="left:2146px;top:1202px;width:9px;height:1px;background:#22cc55"></div>
<div class="abs" style="left:2146px;top:1205px;width:9px;height:1px;background:#22cc55"></div>
<div class="abs" style="left:2146px;top:1208px;width:9px;height:1px;background:#22cc55"></div>
<div class="abs" style="left:2146px;top:1211px;width:9px;height:1px;background:#22cc55"></div>
<div class="abs" style="left:2146px;top:1214px;width:9px;height:1px;background:#22cc55"></div>
<div class="abs" style="left:2146px;top:1217px;width:9px;height:1px;background:#22cc55"></div>
<div class="abs" style="left:2146px;top:1220px;width:9px;height:1px;background:#22cc55"></div>
<div class="abs" style="left:2146px;top:1223px;width:9px;height:1px;background:#22cc55"></div>
<div class="abs" style="left:2146px;top:1226px;width:9px;height:1px;background:#22cc55"></div>
<div class="abs" style="left:2146px;top:1229px;width:9px;height:1px;background:#22cc55"></div>
<div class="abs" style="left:2146px;top:1232px;width:9px;height:1px;background:#22cc55"></div>
<div class="abs" style="left:0;top:1288px;width:2160px;height:1px;background:#f1f3f2"></div>


<div class="abs" style="left:331px;top:82px;width:17px;height:1207px;z-index:4;background:linear-gradient(to right,rgba(40,55,85,.40),rgba(40,55,85,.14) 6px,rgba(40,55,85,.04) 12px,rgba(40,55,85,0) 17px)"></div>
<div class="abs" style="left:0;top:82px;width:2160px;height:17px;z-index:6;background:linear-gradient(rgba(40,55,85,.21),rgba(40,55,85,.11) 8px,rgba(40,55,85,0) 17px)"></div>
<div class="abs" style="left:358px;top:297px;width:1px;height:904px;z-index:3;background:#eceff7"></div>
<div class="abs" style="left:2132px;top:297px;width:1px;height:904px;z-index:3;background:#eceff7"></div>
</body></html>
